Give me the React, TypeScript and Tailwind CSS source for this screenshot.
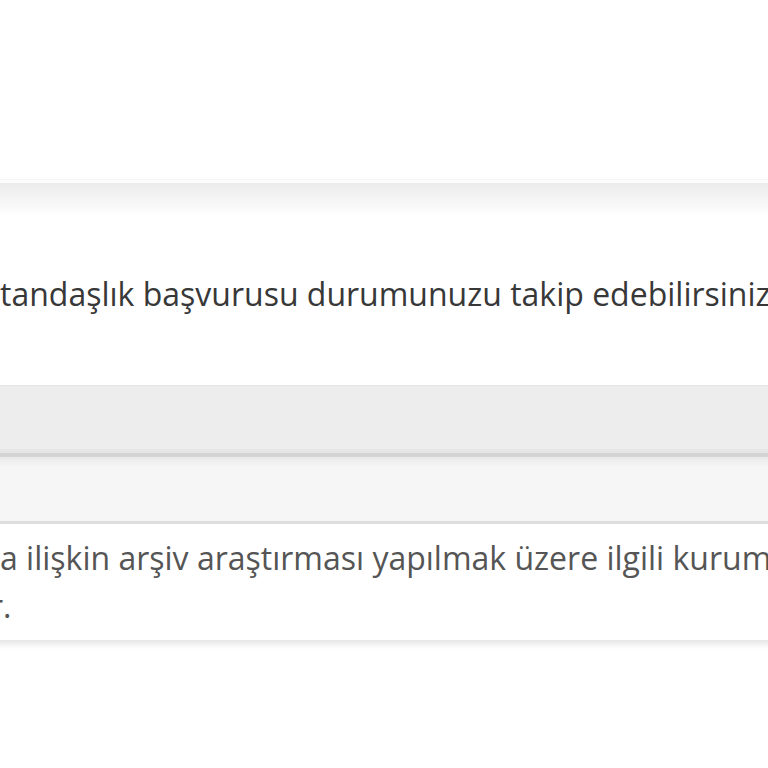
export default function App() {
  return (
    <div className="h-[768px] w-[768px] overflow-hidden bg-white font-['Open_Sans',sans-serif]">
      <div className="h-[179px] bg-white" />
      <div className="h-[4px] border-t border-[#f6f6f6] bg-[#fcfcfc]" />
      <div className="h-[34px] bg-gradient-to-b from-[#ebebeb] to-white" />

      <p className="mt-[53px] whitespace-nowrap text-[32px] leading-[48px] text-[#383838]">
        tandaşlık başvurusu durumunuzu takip edebilirsiniz.
      </p>

      <div className="mt-[67px]">
        <div className="h-[64px] border-t border-[#e4e4e4] bg-[#ededed]" />
        <div className="h-[4px] bg-[#e6e6e6]" />
        <div className="h-[4px] bg-[#d4d4d4]" />
        <div className="h-[10px] bg-gradient-to-b from-[#e9e9e9] to-[#f5f6f5]" />
        <div className="h-[54px] bg-[#f5f6f5]" />
        <div className="border-t-[3px] border-[#dedede] bg-white pb-[10px] pt-[10px] text-[32px] leading-[48px] text-[#555]">
          <p className="whitespace-nowrap">
            a ilişkin arşiv araştırması yapılmak üzere ilgili kuruma gönderilmiştir.
          </p>
          <p className="-ml-[10px] whitespace-nowrap">r.</p>
        </div>
        <div className="h-[9px] bg-gradient-to-b from-[#e6e6e6] to-white" />
      </div>
    </div>
  );
}
